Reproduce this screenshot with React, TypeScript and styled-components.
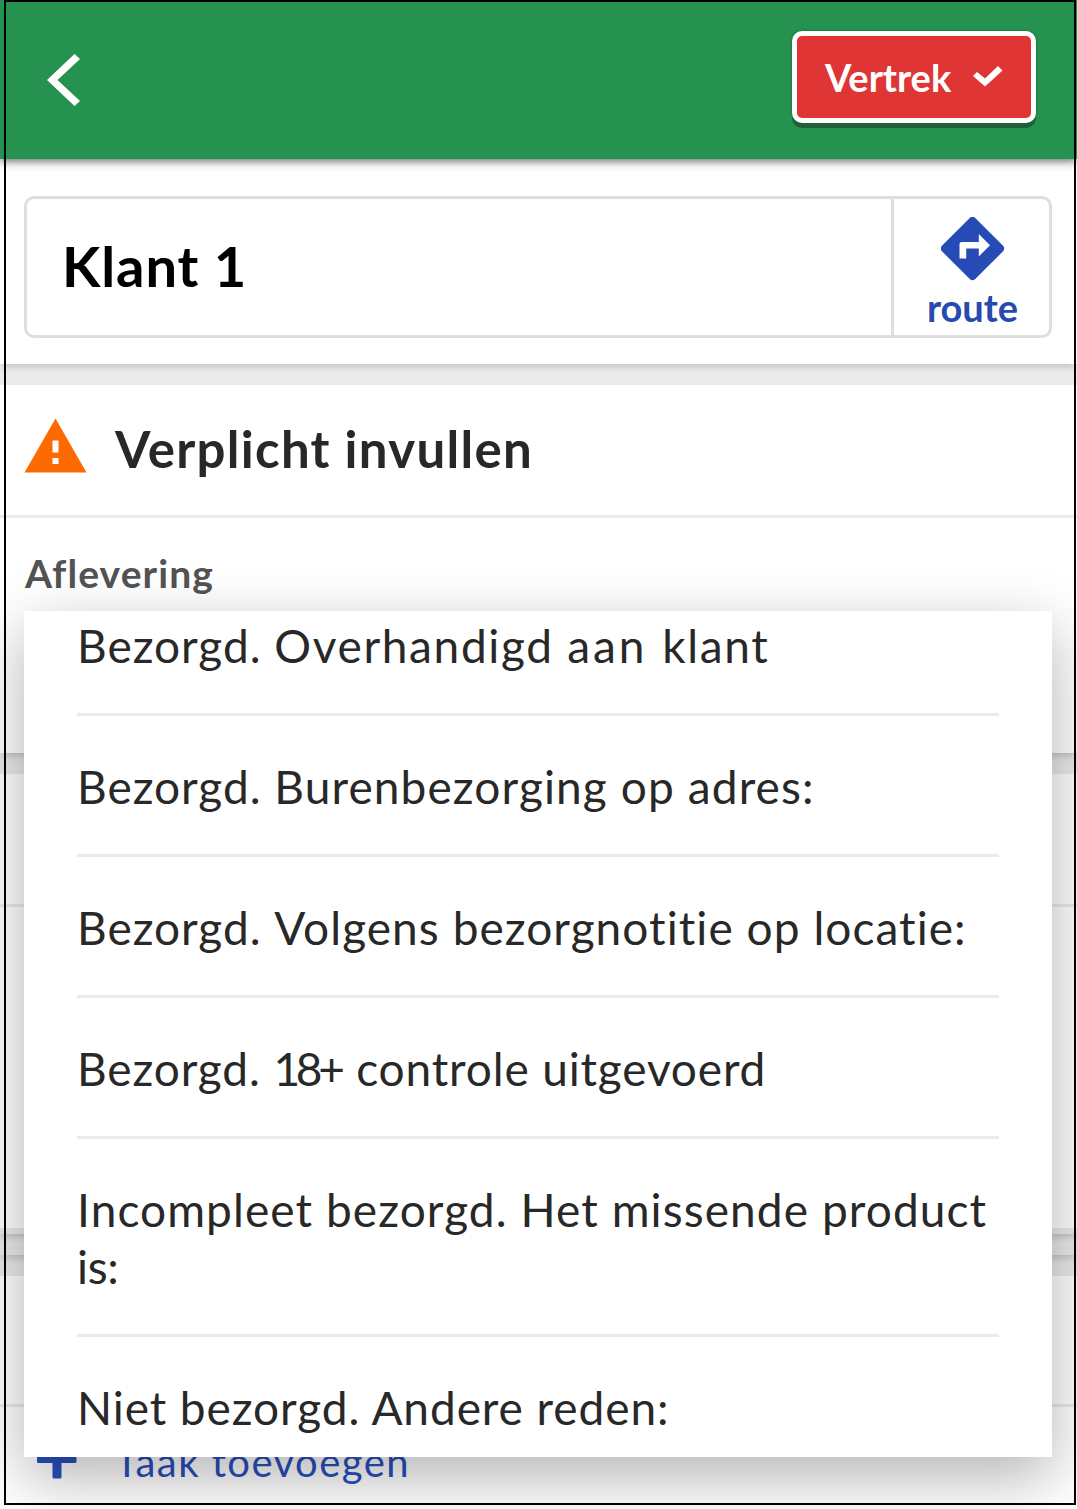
import React from "react";
import styled, { createGlobalStyle } from "styled-components";

const GlobalStyle = createGlobalStyle`
  * { box-sizing: border-box; }
  body {
    margin: 0;
    background: #ebebeb;
    font-family: Lato, "Open Sans", sans-serif;
    color: #282828;
  }
`;

const Screen = styled.div`
  position: relative;
  width: 1077px;
  height: 1509px;
  overflow: hidden;
  display: flex;
  flex-direction: column;
  gap: 21px;
  background: #ebebeb;
`;

const Frame = styled.div`
  position: absolute;
  inset: 0 1px 4px 4px;
  border: 2px solid #000;
  pointer-events: none;
`;

const TopGroup = styled.div`
  display: flex;
  flex-direction: column;
`;

const Header = styled.header`
  position: relative;
  display: flex;
  justify-content: space-between;
  align-items: flex-start;
  height: 159px;
  padding: 31px 41px 0 47px;
  background: #26924f;
  box-shadow: 0 2px 9px rgba(0, 0, 0, 0.62);
`;

const BackButton = styled.button`
  display: flex;
  margin: 23px 0 0;
  padding: 0;
  border: 0;
  background: none;
`;

const DepartButton = styled.button`
  display: flex;
  align-items: flex-start;
  gap: 22px;
  width: 244px;
  height: 92px;
  padding: 17px 0 0 28px;
  border: 5px solid #fff;
  border-radius: 10px;
  background: #df3535;
  box-shadow: 0 5px 0 #205f39, 0 0 3px rgba(0, 0, 0, 0.3);
  color: #fff;
  font: 700 38px/48px Lato, sans-serif;
  white-space: nowrap;

  svg { margin-top: 13px; flex: none; }
`;

const Card = styled.section<{ $height: number }>`
  flex: none;
  height: ${(p) => p.$height}px;
  background: #fff;
  box-shadow: 0 5px 7px -2px rgba(0, 0, 0, 0.17);
`;

const CustomerCard = styled(Card)`
  padding: 37px 25px 26px 24px;
`;

const Customer = styled.div`
  display: flex;
  height: 142px;
  border: 3px solid #dedede;
  border-radius: 10px;
`;

const CustomerName = styled.div`
  flex: 1;
  padding: 31px 0 0 35px;
  color: #000;
  font-size: 56px;
  font-weight: 700;
  line-height: 72px;
  letter-spacing: 0.9px;
`;

const RouteButton = styled.a`
  display: flex;
  flex-direction: column;
  align-items: center;
  width: 158px;
  padding-top: 18px;
  border-left: 3px solid #dedede;
  color: #284aae;
  font-size: 38px;
  font-weight: 700;
  line-height: 48px;

  svg { flex: none; margin-left: 2px; }
  span { margin: 2px 0 0 2px; }
`;

const Heading = styled.div<{ $height: number; $rule?: number }>`
  display: flex;
  height: ${(p) => p.$height}px;
  border-bottom: ${(p) => p.$rule ?? 3}px solid #ebebeb;
`;

const Title = styled.h1`
  margin: 32px 0 0 28px;
  font-size: 51px;
  font-weight: 700;
  line-height: 64px;
  letter-spacing: 1.3px;
`;

const WarningIcon = styled.svg`
  margin: 33px 0 0 24px;
`;

const FieldLabel = styled.div`
  padding: 31px 0 0 25px;
  color: #535353;
  font-size: 39px;
  font-weight: 700;
  line-height: 48px;
  letter-spacing: 1.1px;
`;

const ThinStrip = styled(Card)`
  margin-top: -21px;
  background: transparent;
`;

const AddTask = styled.div`
  display: flex;
  height: 100px;
  padding: 32px 0 0 37px;
  gap: 38px;
  color: #2a50c0;
  font-size: 40px;
  line-height: 50px;
  letter-spacing: 1.45px;

  svg { flex: none; }
  span { margin-top: -2px; }
`;

const Menu = styled.ul`
  position: absolute;
  left: 24px;
  top: 611px;
  width: 1028px;
  height: 846px;
  margin: 0;
  padding: 0 53px;
  overflow: hidden;
  background: #fff;
  box-shadow: 0 20px 58px rgba(0, 0, 0, 0.3);
  list-style: none;
`;

const Option = styled.li`
  padding: 42px 0 39px;
  border-bottom: 3px solid #ebebeb;
  font-size: 46px;
  line-height: 57px;
  white-space: pre-wrap;

  &:first-child { margin-top: -36px; }
  &:last-child { border-bottom: 0; }
`;

const Word = styled.span<{ $spacing: number }>`
  letter-spacing: ${(p) => p.$spacing}px;
`;

type Run = [text: string, spacing: number];

const options: Run[][] = [
  [["Bezorgd. ", 1], ["Overhandigd ", 1.65], ["aan ", 3], ["klant", 1.6]],
  [["Bezorgd. ", 1], ["Burenbezorging op adres:", 1.12]],
  [["Bezorgd. ", 1], ["Volgens bezorgnotitie op locatie:", 1.06]],
  [["Bezorgd. ", 0.9], ["18", -4.3], ["+", -1.3], [" controle uitgevoerd", 0.85]],
  [["Incompleet bezorgd. Het missende product\n", 1.09], ["is:", -0.3]],
  [["Niet bezorgd. Andere reden:", 0.93]],
];

export default function App() {
  return (
    <>
      <GlobalStyle />
      <Screen>
        <TopGroup>
          <Header>
            <BackButton aria-label="Terug">
              <svg width="33" height="52" viewBox="0 0 33 52" fill="#fff">
                <path d="M0 26 27.5 0 33 5 10.5 26 33 47l-5.5 5z" />
              </svg>
            </BackButton>
            <DepartButton>
              Vertrek
              <svg width="30" height="22" viewBox="0 0 30 22" fill="#fff">
                <path d="M0 10 4 6l8 6.5L25 0 29.5 4.5 12 20.5z" />
              </svg>
            </DepartButton>
          </Header>
          <CustomerCard $height={205}>
            <Customer>
              <CustomerName>Klant 1</CustomerName>
              <RouteButton>
                <svg width="64" height="64" viewBox="0.5 0.5 64 64">
                  <path
                    fill="#264bb7"
                    d="M29.5 1.2Q32 -0.8 34.5 1.2L62.8 29.5Q64.5 32 62.8 34.5L34.5 62.8Q32 64.8 29.5 62.8L1.2 34.5Q-0.5 32 1.2 29.5Z"
                  />
                  <path fill="#fff" d="M19 42V27.5Q19 25.5 21 25.5H38.3V17.5L49.5 28.7 38.3 40V32H25.7V42Z" />
                </svg>
                <span>route</span>
              </RouteButton>
            </Customer>
          </CustomerCard>
        </TopGroup>

        <Card $height={368}>
          <Heading $height={133}>
            <WarningIcon width="63" height="55" viewBox="0 0 63 55">
              <path fill="#ff6a00" d="M31.5 0.5 62.5 54.5H0.5z" />
              <path fill="#fff" d="M28.5 22.5h6v12h-6zM28.5 40h6v6h-6z" />
            </WarningIcon>
            <Title>Verplicht invullen</Title>
          </Heading>
          <FieldLabel>Aflevering</FieldLabel>
        </Card>

        <Card $height={460}>
          <Heading $height={133} />
          <Heading $height={327} $rule={6} />
        </Card>
        <ThinStrip $height={21} />

        <Card $height={240}>
          <Heading $height={131} />
          <AddTask>
            <svg width="40" height="40" viewBox="0 0 40 40" fill="currentColor">
              <path d="M17 0h6q1.5 0 1.5 1.5V15.5H38q1.5 0 1.5 1.5v5.5q0 1.5-1.5 1.5H24.5V38q0 1.5-1.5 1.5H17q-1.5 0-1.5-1.5V24H1.5Q0 24 0 22.5V17q0-1.5 1.5-1.5H15.5V1.5Q15.5 0 17 0z" />
            </svg>
            <span>Taak toevoegen</span>
          </AddTask>
        </Card>

        <Menu>
          {options.map((runs) => (
            <Option key={runs.map((r) => r[0]).join("")}>
              {runs.map(([text, spacing]) => (
                <Word key={text} $spacing={spacing}>
                  {text}
                </Word>
              ))}
            </Option>
          ))}
        </Menu>
        <Frame />
      </Screen>
    </>
  );
}
